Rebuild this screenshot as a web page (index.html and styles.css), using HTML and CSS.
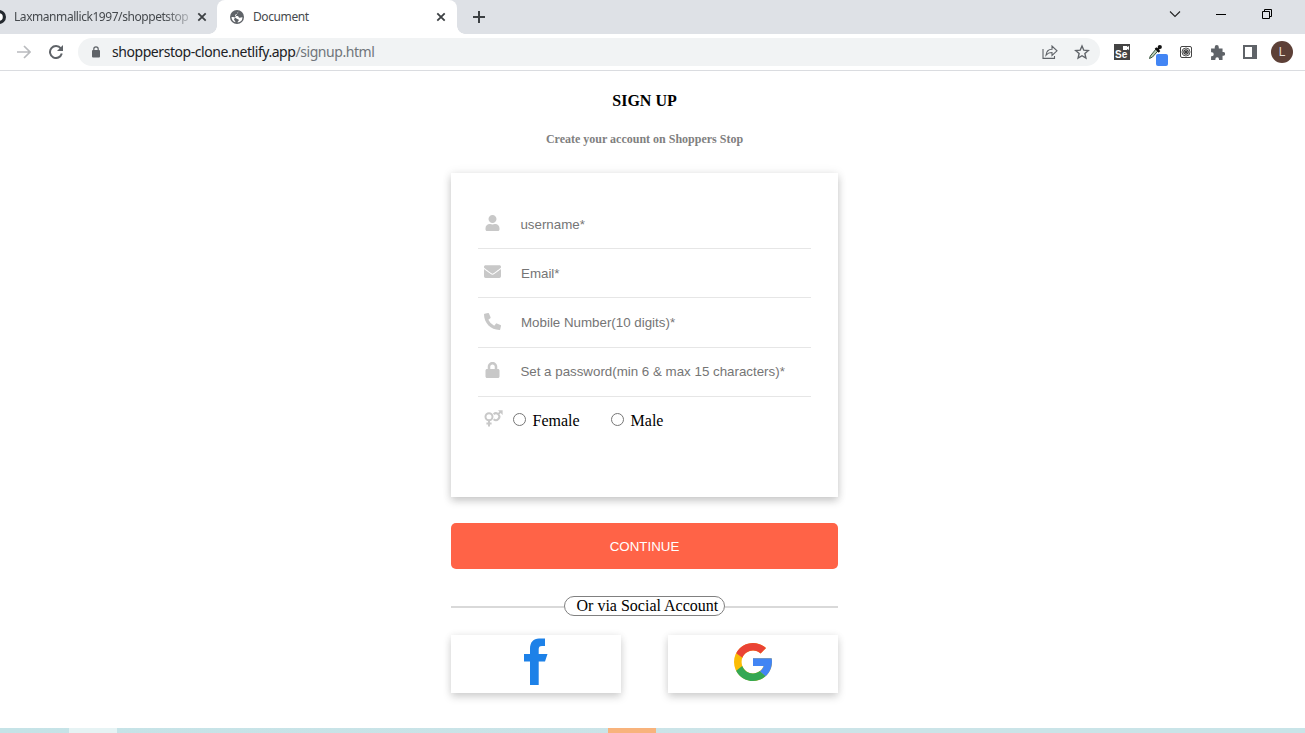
FILE: index.html
```html
<!DOCTYPE html>
<html lang="en">
<head>
<meta charset="utf-8">
<title>Document</title>
<link rel="stylesheet" href="styles.css">
</head>
<body>
<div class="browser">
  <header class="tabs">
    <div class="tab tab-back">
      <svg class="github" width="14" height="16" viewBox="0 0 14 16"><circle cx="-1" cy="8" r="5.4" fill="#fff" stroke="#24292f" stroke-width="3.2"/></svg>
      <span class="tab-title fade">Laxmanmallick1997/shoppetstop</span>
      <svg class="close" width="10" height="10" viewBox="0 0 10 10"><path d="M1.3 1.3l7.4 7.4M8.7 1.3L1.3 8.7"/></svg>
    </div>
    <div class="tab tab-active">
      <svg class="globe" width="14" height="14" viewBox="0 0 14 14"><circle cx="7" cy="7" r="7" fill="#5f6368"/><path d="M8.200 1.500C8.300 3 7.700 3.600 6.300 3.900 5.400 4.100 5.600 5 4.900 5.400c.5.900 1.600.5 2.700.7 1 .2.900 1.500 2 1.700 1.100.1 1.700-.6 2.900-.4A5.600 5.600 0 0 1 7.600 12.500c-.3-1.200 1.300-1.400 1.200-2.500C8.700 8.900 7.300 9.300 6.400 8.500 5.300 7.400 3.300 7 1.500 7A5.600 5.600 0 0 0 5.400 12.300C5.600 11 4.400 10.800 4 9.600" fill="#fff"/></svg>
      <span class="tab-title">Document</span>
      <svg class="close" width="10" height="10" viewBox="0 0 10 10"><path d="M1.3 1.3l7.4 7.4M8.7 1.3L1.3 8.7"/></svg>
    </div>
    <svg class="plus" width="12" height="12" viewBox="0 0 12 12"><path d="M6 0v12M0 6h12" stroke="#3c4043" stroke-width="2"/></svg>
    <div class="window-controls">
      <svg width="12" height="12" viewBox="0 0 12 12"><path d="M1 3.500l5 5 5-5" fill="none" stroke="#222" stroke-width="1.100"/></svg>
      <svg width="12" height="12" viewBox="0 0 12 12"><path d="M1 6.500h10" stroke="#000"/></svg>
      <svg width="12" height="12" viewBox="0 0 12 12"><path d="M1.500 3.500h7v7h-7zM3.500 3V1.500h7v7H9" fill="none" stroke="#000"/></svg>
    </div>
  </header>
  <nav class="toolbar">
    <svg class="forward" width="14" height="14" viewBox="0 0 14 14"><path d="M0 7h13M7 1l6 6-6 6" fill="none" stroke="#b9bbbe" stroke-width="1.700"/></svg>
    <svg class="reload" width="14" height="14" viewBox="0 0 14 14"><path d="M11.800 3.400A6 6 0 1 0 12.800 8.600" fill="none" stroke="#5f6368" stroke-width="2"/><path d="M14 0v6H8z" fill="#5f6368"/></svg>
    <div class="address">
      <svg class="padlock" width="8" height="12" viewBox="0 0 8 12"><rect y="4" width="8" height="7.500" rx="1" fill="#5f6368"/><path d="M1.800 5V3a2.200 2.200 0 0 1 4.400 0v2" fill="none" stroke="#5f6368" stroke-width="1.200"/></svg>
      <span class="url">shopperstop-clone.netlify.app<span class="path">/signup.html</span></span>
      <svg class="share" width="16" height="14" viewBox="0 0 16 14"><path d="M1 4v9.400h11.500V11M4 10.200c.4-3.800 2.600-6 6-6V1l5 4.800-5 4.600V7.500C7.300 7.500 5.400 8.400 4 10.200z" fill="none" stroke="#5f6368" stroke-width="1.100"/></svg>
      <svg class="star" width="16" height="16" viewBox="0 0 16 16"><path d="M8 2l1.800 4.200 4.500.4-3.400 3 1 4.400L8 11.700 4.100 14l1-4.400-3.400-3 4.500-.4z" fill="none" stroke="#5f6368" stroke-width="1.400"/></svg>
    </div>
    <div class="extensions">
      <div class="selenium"><svg width="6" height="4" viewBox="0 0 6 4"><path d="M0 0h4v1l2-1v4L4 3v1H0z" fill="#fff"/></svg><span>Se</span></div>
      <svg class="dropper" width="20" height="22" viewBox="0 0 20 22"><path d="M1.500 14.500l.8-2.500L8 5l2 1.800L4.500 13z" fill="#b9cfb8" stroke="#3b5540"/><path d="M7.500 4l4 3.800M9.500 5.700l2.200-2.500" stroke="#111" stroke-width="2.400"/><circle cx="11.800" cy="3" r="2.100" fill="#111"/><rect x="8" y="10" width="12" height="12" rx="2" fill="#4285f4"/></svg>
      <svg class="target" width="12" height="12" viewBox="0 0 12 12"><rect x=".5" y=".5" width="11" height="11" rx="1.500" fill="#fff" stroke="#444"/><circle cx="6" cy="6" r="4" fill="none" stroke="#444" stroke-width=".9"/><circle cx="6" cy="6" r="2.200" fill="#bbb" stroke="#333" stroke-width="1.100"/><circle cx="6" cy="6" r="1" fill="#111"/></svg>
      <svg class="puzzle" width="15" height="15" viewBox="0 0 14 14"><path d="M1 3.300h3.400V2a1.900 1.900 0 0 1 3.800 0v1.300h3.500v3.300h.7a1.700 1.700 0 0 1 0 3.400h-.7v4H8.400v-.8a1.700 1.700 0 0 0-3.400 0v.8H1v-3.600h.7a1.800 1.800 0 0 0 0-3.600H1z" fill="#5f6368"/></svg>
      <svg class="panel" width="14" height="14" viewBox="0 0 14 14"><path d="M0 0h14v14H0zM2 2v10h7V2z" fill="#5f6368" fill-rule="evenodd"/></svg>
      <span class="avatar">L</span>
    </div>
  </nav>
</div>

<main class="page">
  <h1 class="heading">SIGN UP</h1>
  <h2 class="subheading">Create your account on Shoppers Stop</h2>
  <form class="card">
    <label class="field">
      <svg width="17" height="16" viewBox="-32 0 512 512"><path d="M224 256c70.700 0 128-57.300 128-128S294.700 0 224 0 96 57.300 96 128s57.300 128 128 128zm89.600 32h-16.700c-22.200 10.200-46.900 16-72.900 16s-50.600-5.800-72.900-16h-16.700C60.200 288 0 348.200 0 422.400V464c0 26.500 21.500 48 48 48h352c26.500 0 48-21.500 48-48v-41.600c0-74.200-60.200-134.400-134.400-134.400z"/></svg>
      <input class="first" type="text" placeholder="username*">
    </label>
    <label class="field raised">
      <svg width="17" height="17" viewBox="0 0 512 512"><path d="M502.300 190.800c3.900-3.100 9.700-.2 9.700 4.700V400c0 26.500-21.500 48-48 48H48c-26.500 0-48-21.500-48-48V195.600c0-5 5.700-7.800 9.700-4.700 22.400 17.400 52.100 39.500 154.100 113.600 21.100 15.400 56.700 47.800 92.200 47.600 35.700.3 72-32.800 92.300-47.600 102-74.100 131.600-96.300 154-113.700zM256 320c23.200.4 56.600-29.200 73.400-41.400 132.700-96.300 142.800-104.700 173.400-128.700 5.800-4.500 9.200-11.500 9.200-18.900v-19c0-26.500-21.500-48-48-48H48c-26.500 0-48 21.500-48 48v19c0 7.400 3.400 14.300 9.200 18.900 30.600 23.900 40.700 32.400 173.400 128.700 16.800 12.200 50.200 41.800 73.400 41.400z"/></svg>
      <input type="text" placeholder="Email*">
    </label>
    <label class="field tall">
      <svg width="17" height="17" viewBox="0 0 512 512"><path d="M497.390 361.800l-112-48a24 24 0 0 0-28 6.900l-49.600 60.600A370.660 370.660 0 0 1 130.600 204.110l60.600-49.600a23.940 23.940 0 0 0 6.900-28l-48-112A24.160 24.160 0 0 0 122.600.61l-104 24A24 24 0 0 0 0 48c0 256.500 207.900 464 464 464a24 24 0 0 0 23.400-18.600l24-104a24.290 24.290 0 0 0-14.010-27.600z"/></svg>
      <input type="text" placeholder="Mobile Number(10 digits)*">
    </label>
    <label class="field password raised">
      <svg width="17" height="16" viewBox="-32 0 512 512"><path d="M400 224h-24v-72C376 68.200 307.800 0 224 0S72 68.200 72 152v72H48c-26.500 0-48 21.500-48 48v192c0 26.500 21.500 48 48 48h352c26.500 0 48-21.500 48-48V272c0-26.500-21.500-48-48-48zm-104 0H152v-72c0-39.700 32.300-72 72-72s72 32.300 72 72v72z"/></svg>
      <input class="first" type="text" placeholder="Set a password(min 6 &amp; max 15 characters)*">
    </label>
    <div class="gender">
      <svg width="19" height="17" viewBox="0 0 19 17"><g fill="none" stroke="#c8c8c8" stroke-width="2"><circle cx="5" cy="6.700" r="3.500"/><path d="M5 10.300v6.200M2.400 13.600h5.200M9.600 4.200a3.400 3.400 0 1 1 0 5M14 4.400l2.800-2.800"/></g><path d="M14 .3h4.600v4.600z" fill="#c8c8c8"/></svg>
      <label class="choice"><input type="radio" name="gender">Female</label>
      <label class="choice"><input type="radio" name="gender">Male</label>
    </div>
  </form>
  <button class="continue" type="button">CONTINUE</button>
  <div class="divider"><span>Or via Social Account</span></div>
  <div class="social">
    <a class="provider"><svg width="24" height="48" viewBox="0 0 24 48"><path d="M6 47V23.500H0V16h6V11C6 4 9.500.5 15 .5h6V8h-3c-2.500 0-3.300 1-3.300 3.500V16H23.500L21 23.500h-6.300V47z" fill="#1d81e8"/></svg></a>
    <a class="provider"><svg width="38" height="38" viewBox="4 4 40 40"><path fill="#fbbc05" d="M43.600 20.100H42V20H24v8h11.300C33.700 32.700 29.200 36 24 36c-6.600 0-12-5.400-12-12s5.400-12 12-12c3.100 0 5.800 1.200 8 3l5.700-5.700C34 6.100 29.300 4 24 4 13 4 4 13 4 24s9 20 20 20 20-9 20-20c0-1.300-.1-2.700-.4-3.900z"/><path fill="#ea4335" d="M6.300 14.700l6.600 4.800C14.700 15.100 19 12 24 12c3.100 0 5.800 1.200 8 3l5.700-5.700C34 6.100 29.300 4 24 4 16.300 4 9.700 8.300 6.300 14.700z"/><path fill="#34a853" d="M24 44c5.200 0 9.900-2 13.400-5.200l-6.200-5.200C29.200 35.100 26.700 36 24 36c-5.200 0-9.600-3.300-11.300-7.900l-6.500 5C9.500 39.600 16.200 44 24 44z"/><path fill="#4285f4" d="M43.600 20.100H24v8h11.300c-.8 2.200-2.200 4.200-4.100 5.600l6.200 5.200C37 39.200 44 34 44 24c0-1.300-.1-2.700-.4-3.900z"/></svg></a>
  </div>
</main>
<footer class="strip"><i class="light"></i><i class="orange"></i></footer>
</body>
</html>
```
FILE: styles.css
```css
* { box-sizing: border-box; }
body { margin: 0; height: 733px; overflow: hidden; background: #fff; display: flex; flex-direction: column; font-family: "Liberation Serif", serif; font-size: 16px; color: #000; }
svg { display: block; flex: none; }
.browser { height: 71px; border-bottom: 1px solid #dadce0; font-family: "Noto Sans", sans-serif; }
.tabs { display: flex; align-items: center; height: 34px; background: #dee1e6; }
.tab { display: flex; align-items: center; height: 34px; flex: none; }
.tab-back { width: 217px; padding-right: 10px; }
.tab-active { position: relative; width: 240px; padding: 0 11px 0 13px; background: #fff; border-radius: 8px 8px 0 0; }
.tab-active::before, .tab-active::after { content: ""; position: absolute; bottom: 0; width: 8px; height: 8px; }
.tab-active::before { right: 100%; background: radial-gradient(circle at 0 0, transparent 7.5px, #fff 8px); }
.tab-active::after { left: 100%; background: radial-gradient(circle at 100% 0, transparent 7.5px, #fff 8px); }
.tab-title { font-size: 12px; line-height: 16px; color: #45494d; white-space: nowrap; }
.tab-back .tab-title { width: 178px; letter-spacing: -0.44px; }
.fade { -webkit-mask-image: linear-gradient(90deg, #000 150px, rgba(0,0,0,.25) 176px); mask-image: linear-gradient(90deg, #000 150px, rgba(0,0,0,.25) 176px); }
.tab-active .tab-title { margin-left: 9px; letter-spacing: -0.4px; }
.close { margin-left: auto; stroke: #3c4043; stroke-width: 1.8; }
.plus { margin-left: 16px; }
.window-controls { display: flex; gap: 34px; margin: -6px 32px 0 auto; }
.toolbar { display: flex; align-items: center; height: 36px; padding: 0 12px 0 17px; }
.reload { margin-left: 18px; }
.address { display: flex; align-items: center; width: 1022px; height: 28px; margin-left: 15px; padding: 0 10px 0 14px; border-radius: 14px; background: #f1f3f4; }
.url { margin-left: 12px; font-size: 14px; line-height: 20px; letter-spacing: -0.44px; color: #202124; white-space: nowrap; }
.path { color: #70757a; }
.share { margin-left: auto; }
.star { margin-left: 16px; }
.extensions { display: flex; align-items: center; margin-left: 14px; }
.dropper { margin: 5px 0 0 18px; }
.target { margin-left: 12px; }
.puzzle { margin-left: 18px; }
.panel { margin-left: 18px; }
.selenium { display: flex; flex-direction: column; align-items: flex-end; width: 16px; height: 16px; padding: 2px 1px; background: #444; color: #fff; font: bold 10px/9px "Liberation Sans", sans-serif; }
.selenium span { width: 14px; }
.avatar { width: 22px; height: 22px; margin-left: 14px; border-radius: 50%; background: #5d4037; color: #e5deda; font: 12px/22px "Liberation Sans", sans-serif; text-align: center; }
.page { display: flex; flex: 1; flex-direction: column; width: 387px; margin-left: 451px; }
.heading { margin: 21px 0 0; font-size: 16px; line-height: 18px; text-align: center; }
.subheading { margin: 22px 0 0; font-size: 12px; line-height: 14px; color: #808080; text-align: center; }
.card { height: 324px; margin-top: 27px; padding: 27px 27px 0; box-shadow: 0 4px 8px rgba(0,0,0,.19), 0 0 10px rgba(0,0,0,.08); }
.field { display: flex; align-items: center; height: 49px; padding-left: 6px; border-bottom: 1px solid #e6e6e6; fill: #c8c8c8; }
.field.tall { height: 50px; }
.field.password { padding-bottom: 1px; }
.field svg { margin-top: -2px; }
.field.raised svg { margin-top: -4px; }
.field input { flex: 1; min-width: 0; margin-left: 20px; padding: 0; border: 0; outline: 0; background: none; font: 13.333px "Liberation Sans", sans-serif; }
.field .first { margin-left: 19.4px; }
.field input::placeholder { color: #757575; }
.gender { display: flex; align-items: center; height: 47px; padding-left: 6px; }
.gender > svg { margin: -4px 7px 0 0; }
.choice { display: flex; align-items: center; gap: 6.5px; margin: 0 30px 0 3px; line-height: 18px; }
.choice + .choice { margin-left: 1.5px; }
.choice input { width: 13px; height: 13px; margin: -2px 0 0; }
.continue { height: 46px; margin-top: 26px; border: 0; border-radius: 5px; background: #ff6347; color: #fff; font: 13.333px "Liberation Sans", sans-serif; }
.divider { display: flex; align-items: center; height: 20px; margin-top: 27px; }
.divider::before, .divider::after { content: ""; flex: 1; height: 2px; margin-top: 1px; background: #d9d9d9; }
.divider span { width: 161px; height: 20px; padding-left: 11.5px; border: 1px solid #808080; border-radius: 10px; line-height: 18px; white-space: nowrap; }
.social { display: flex; justify-content: space-between; margin-top: 19px; }
.provider { display: flex; align-items: center; justify-content: center; width: 170px; height: 58px; padding-bottom: 4px; box-shadow: 0 4px 8px rgba(0,0,0,.17), 0 0 8px rgba(0,0,0,.06); }
.strip { display: flex; height: 5px; background: linear-gradient(90deg, #c5e3e7, #cce4e8 60%, #c8e4e8); }
.light { width: 48px; margin-left: 69px; background: #e6f3f4; }
.orange { width: 48px; margin-left: 491px; background: #f8b37c; }
```
